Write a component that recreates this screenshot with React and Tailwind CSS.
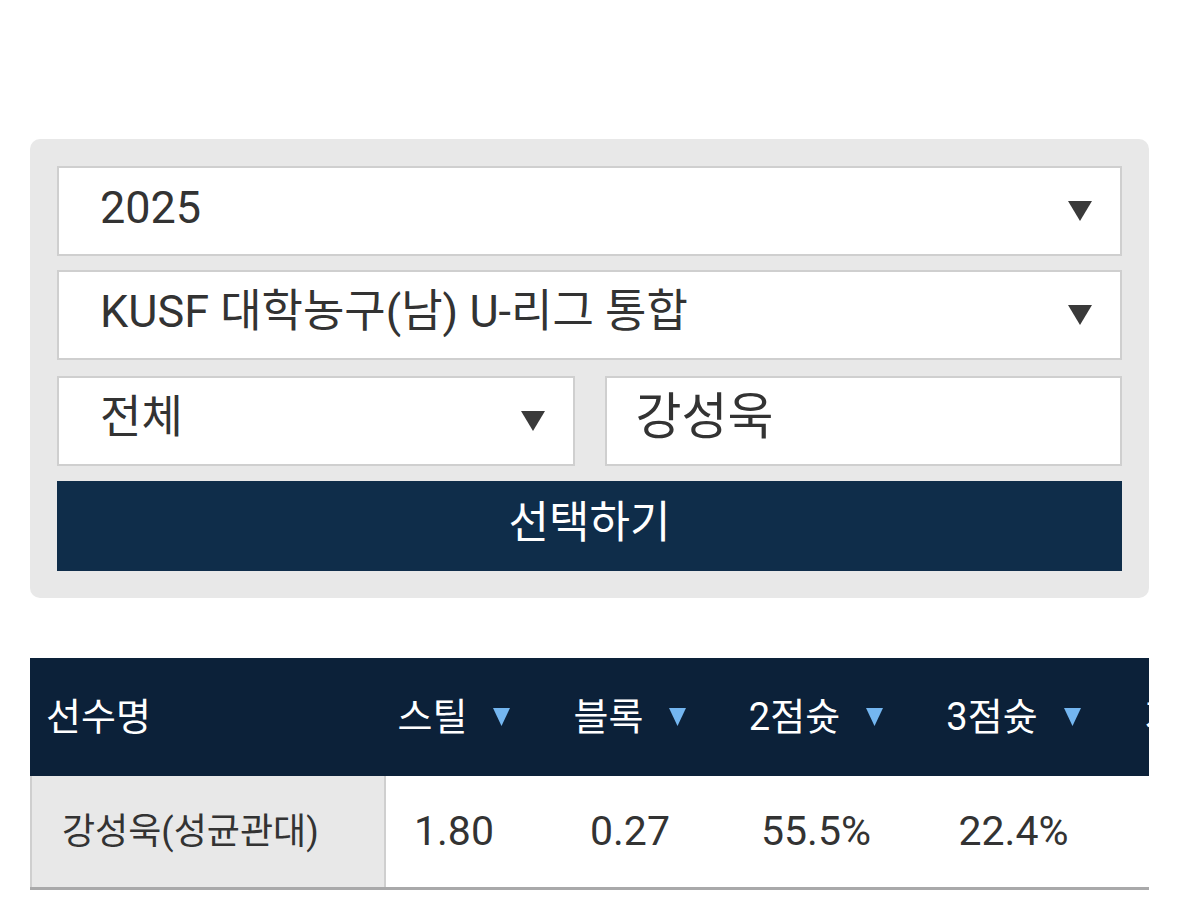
const font = { fontFamily: '"Roboto", "Noto Sans CJK KR", sans-serif' };

const columns = [
  { label: "스틸", value: "1.80", width: "w-[136px]" },
  { label: "블록", value: "0.27", width: "w-[216px]" },
  { label: "2점슛", value: "55.5%", width: "w-[156px]" },
  { label: "3점슛", value: "22.4%", width: "w-[239px]" },
  { label: "자유투", value: "71.3%", width: "w-[172px]" },
];

function Caret({ className }) {
  return (
    <svg viewBox="0 0 24 20" preserveAspectRatio="none" className={className}>
      <polygon points="0,0 24,0 12,20" fill="currentColor" />
    </svg>
  );
}

function SelectBox({ label, className = "" }) {
  return (
    <div
      className={`flex h-[90px] items-center justify-between border-2 border-[#cfcfcf] bg-white pl-[41px] pr-[28px] text-[45px] text-[#333] ${className}`}
    >
      <span className="-mt-[6px]">{label}</span>
      <Caret className="h-[20px] w-[24px] text-[#3a3a3a]" />
    </div>
  );
}

export default function App() {
  return (
    <div className="min-h-[904px] bg-white pt-[139px]" style={font}>
      <div className="mx-[30px] rounded-[10px] bg-[#e8e8e8] p-[27px]">
        <SelectBox label="2025" />
        <SelectBox label="KUSF 대학농구(남) U-리그 통합" className="mt-[14px]" />
        <div className="mt-[16px] grid grid-cols-2 gap-[30px]">
          <SelectBox label="전체" />
          <div className="flex h-[90px] items-center border-2 border-[#cfcfcf] bg-white pl-[29px] text-[50px] text-[#333]">
            <span className="-mt-[8px]">강성욱</span>
          </div>
        </div>
        <button
          type="button"
          className="mt-[15px] flex h-[90px] w-full items-center justify-center bg-[#0f2d4a] text-[44px] text-white"
        >
          <span className="-mt-[6px]">선택하기</span>
        </button>
      </div>

      <div className="mx-[30px] mt-[60px] overflow-hidden">
        <div className="flex h-[118px] w-max items-center bg-[#0c2139] text-[38px] text-white">
          <div className="w-[356px] shrink-0 pl-[16px]">선수명</div>
          {columns.map((col) => (
            <div key={col.label} className={`flex shrink-0 items-center justify-center ${col.width}`}>
              <span>{col.label}</span>
              <Caret className="ml-[26px] h-[18px] w-[17px] text-[#74b6f0]" />
            </div>
          ))}
        </div>
        <div className="flex h-[114px] w-max items-stretch border-b-[3px] border-[#a9a9aa] text-[41px] text-[#333]">
          <div className="flex w-[356px] shrink-0 items-center border-x-2 border-[#cfcfcf] bg-[#e8e8e8] pl-[30px] text-[36px]">
            강성욱(성균관대)
          </div>
          {columns.map((col) => (
            <div key={col.label} className={`flex shrink-0 items-center justify-center ${col.width}`}>
              {col.value}
            </div>
          ))}
        </div>
      </div>
    </div>
  );
}
